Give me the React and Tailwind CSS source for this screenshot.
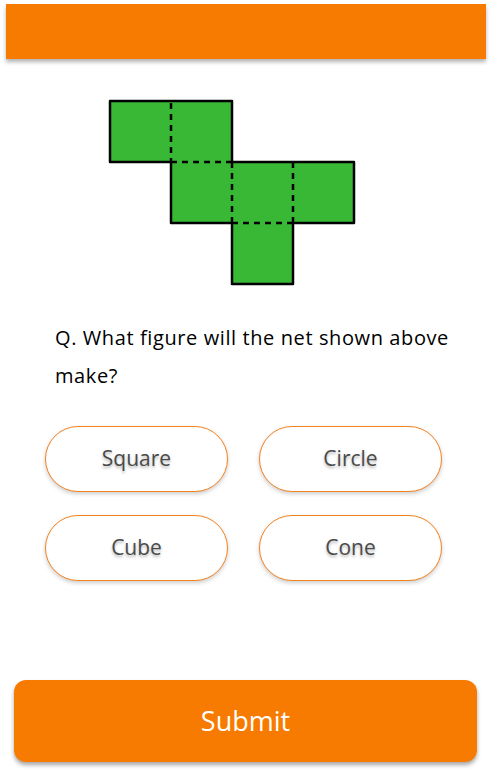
import React from "react";

const options = ["Square", "Circle", "Cube", "Cone"];

function Net() {
  return (
    <svg width="250" height="190" viewBox="0 0 250 190">
      <g fill="#38b834" stroke="#000" strokeWidth="2.5" strokeLinejoin="round">
        <path d="M2 2 H124 V63 H246 V124 H185 V185 H124 V124 H63 V63 H2 Z" />
      </g>
      <g stroke="#000" strokeWidth="2.5" strokeDasharray="6 5" fill="none">
        <line x1="63" y1="4" x2="63" y2="63" />
        <line x1="63" y1="63" x2="124" y2="63" />
        <line x1="124" y1="63" x2="124" y2="124" />
        <line x1="185" y1="63" x2="185" y2="124" />
        <line x1="124" y1="124" x2="185" y2="124" />
      </g>
    </svg>
  );
}

export default function App() {
  return (
    <div
      className="w-[492px] h-[770px] bg-white flex flex-col"
      style={{ fontFamily: "'Open Sans', sans-serif" }}
    >
      <div className="mx-[6px] mt-[4px] h-[55px] bg-[#f77b00] shadow-[0_3px_4px_rgba(0,0,0,0.3)]" />

      <div className="mt-[40px] pl-[108px]">
        <Net />
      </div>

      <p className="mt-[30px] pl-[55px] pr-[28px] text-[20px] tracking-[0.6px] leading-[38px] text-black">
        Q. What figure will the net shown above make?
      </p>

      <div className="mt-[31px] grid grid-cols-2 gap-x-[31px] gap-y-[23px] px-[45px] w-[487px]">
        {options.map((o) => (
          <button
            key={o}
            className="h-[66px] rounded-full border border-[#f58220] bg-white text-[21px] text-[#4a4a4a] shadow-[0_2px_4px_rgba(0,0,0,0.2)] [text-shadow:0_2px_3px_rgba(0,0,0,0.3)]"
          >
            {o}
          </button>
        ))}
      </div>

      <div className="flex-1" />

      <button className="mx-[14px] mb-[8px] w-[463px] h-[82px] rounded-[12px] bg-[#f77b00] text-white text-[27px] shadow-[0_3px_4px_rgba(0,0,0,0.35)]">
        Submit
      </button>
    </div>
  );
}
